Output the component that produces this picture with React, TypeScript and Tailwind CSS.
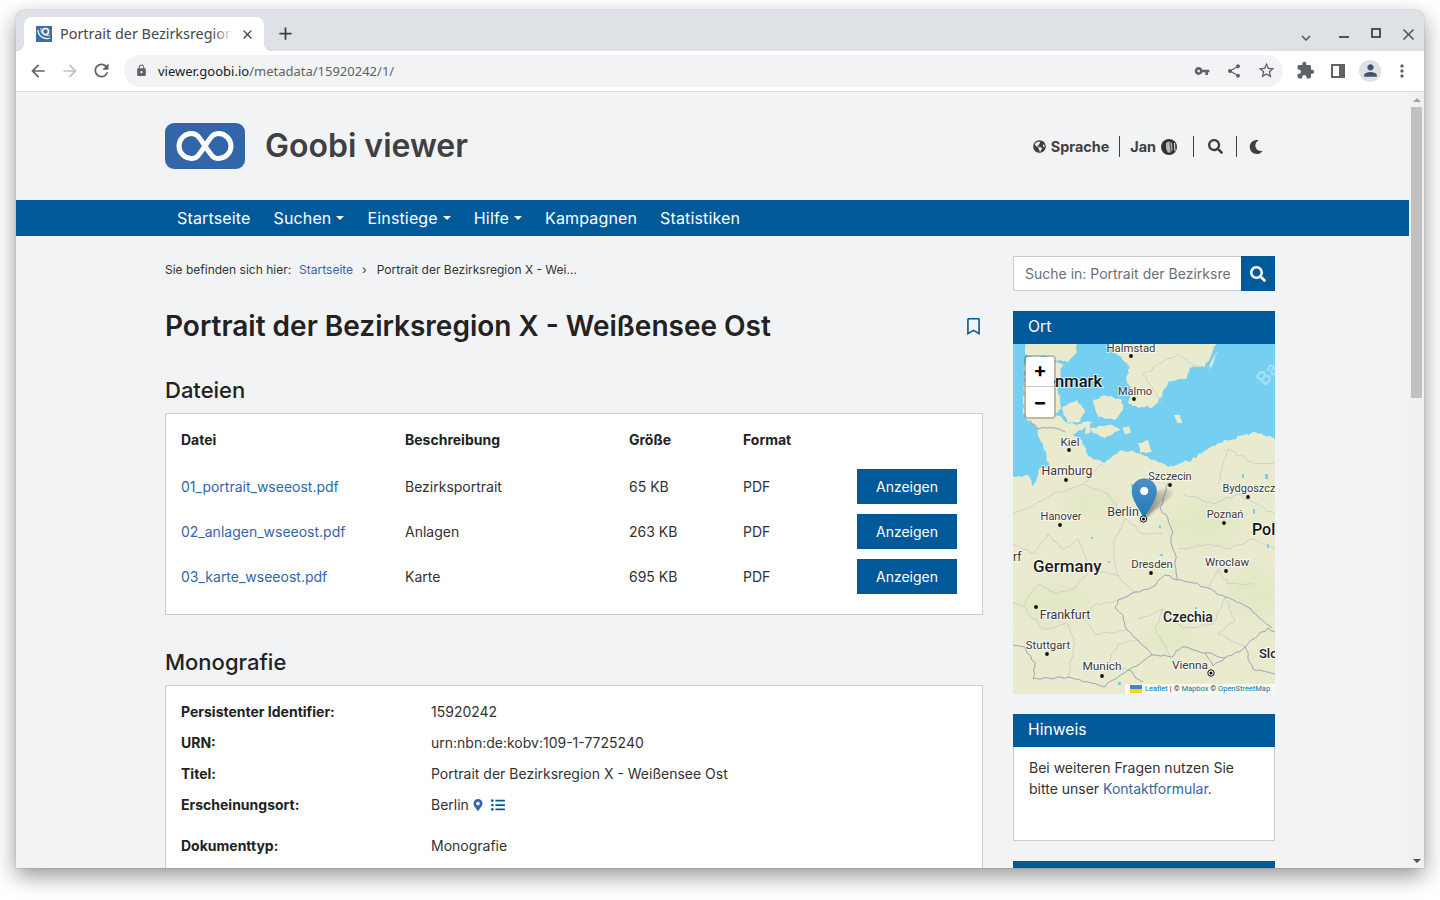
import React from 'react';
import { MdArrowBack, MdArrowForward, MdRefresh, MdLock, MdVpnKey, MdShare, MdStarBorder, MdExtension, MdMoreVert, MdPerson, MdClose, MdAdd, MdKeyboardArrowDown } from 'react-icons/md';
import { FaGlobeAmericas, FaSearch, FaMoon, FaRegBookmark, FaMapMarkerAlt, FaListUl } from 'react-icons/fa';

const files = [
  ['01_portrait_wseeost.pdf', 'Bezirksportrait', '65 KB'],
  ['02_anlagen_wseeost.pdf', 'Anlagen', '263 KB'],
  ['03_karte_wseeost.pdf', 'Karte', '695 KB'],
];

let seed = 7;
function rnd() {
  seed = (seed * 9301 + 49297) % 233280;
  return seed / 233280 - 0.5;
}
function jag(points: string, amp: number, step: number) {
  const p = points.split(' ').map((s) => s.split(',').map(Number));
  const out: string[] = [];
  for (let i = 0; i < p.length - 1; i++) {
    const [x0, y0] = p[i];
    const [x1, y1] = p[i + 1];
    const len = Math.hypot(x1 - x0, y1 - y0);
    const n = Math.max(1, Math.round(len / step));
    for (let k = 0; k < n; k++) {
      const t = k / n;
      const j = k === 0 ? 0 : amp;
      out.push(`${(x0 + (x1 - x0) * t + rnd() * j).toFixed(1)},${(y0 + (y1 - y0) * t + rnd() * j).toFixed(1)}`);
    }
  }
  out.push(p[p.length - 1].join(','));
  return out.join(' ');
}

const mainland = jag('-6,356 -6,134 15,131 20,142 27,124 36,122 30,100 22,82 14,76 10,66 12,20 40,17 50,20 45,40 48,65 42,70 56,80 80,78 70,86 58,90 69,96 75,112 92,119 109,106 125,109 142,116 155,123 179,116 205,99 242,88 268,96 268,356 -6,356', 3, 3);
const sweden = jag('95,-5 205,-5 197,14 192,23 177,24 174,34 155,38 149,53 140,63 125,64 115,59 118,44 113,34 117,23 105,11 99,6 95,-5', 2.6, 3);
const islands = [
  '49,63 64,56 72,66 67,78 54,79 49,63',
  '80,56 92,51 109,56 110,66 102,76 85,73 80,56',
  '77,84 99,81 107,86 92,94 80,89 77,84',
  '125,99 135,96 139,108 127,109 125,99',
  '161,71 167,71 169,79 164,79 161,71',
  '205,6 200,20 195,29 197,20 205,6',
  '12,-5 62,-5 64,8 55,18 40,16 30,12 20,14 12,10 12,-5',
  '110,83 116,82 118,88 112,90 110,83',
  '72,82 76,80 78,88 72,90 72,82',
].map((s) => jag(s, 2, 3));
const borders = [
  '155,139 152,150 147,163 155,175 159,186 158,198 162,209 163,225 164,236',
  '164,236 152,231 139,243 122,248 105,256 102,263 110,271 114,286 125,296 139,311 159,313 169,303 192,309 212,314 232,303 255,284 262,288',
  '164,236 180,239 195,244 212,253 235,263 259,284',
  '139,311 115,326 130,338',
  '55,333 75,338 92,343 115,326',
  '0,301 12,303 22,318 20,335 38,335 55,333',
  '17,76 25,85 42,84 52,88',
  '192,309 200,322 212,314',
  '232,303 240,325 262,330',
].map((s) => jag(s, 2.6, 4));
const faint = [
  '0,200 20,210 35,190 50,205 65,195 78,225 60,245 45,250 25,240 10,262 0,258',
  '78,225 105,232 122,248 105,256 80,262 70,275 82,290 114,286',
  '70,140 95,150 112,175 100,200 105,232',
  '170,150 200,160 225,150 262,170',
  '165,205 195,200 215,205 240,195 262,205',
  '195,244 205,225 215,240 240,240',
  '125,275 150,265 170,285 200,280 212,253',
  '10,262 30,285 55,280 62,300 55,333',
  '150,60 130,30 165,10 185,24',
  '205,140 215,105 242,120 262,118',
  '0,170 22,160 40,150 70,140 90,120',
  '112,175 130,190 150,190',
  '212,253 222,275 205,290 232,303',
  '150,265 142,285 159,313',
  '125,296 105,300 95,320 115,326',
].map((s) => jag(s, 2.6, 4));
const labels: [string, number, number, number][] = [
  ['Halmstad', 118, 8, 11.3], ['Malmo', 122, 51, 11], ['Kiel', 57, 102, 11.5], ['Hamburg', 54, 131, 12.3], ['Szczecin', 157, 136, 11], ['Bydgoszcz', 236, 148, 11],
  ['Hanover', 48, 176, 11], ['Poznań', 212, 174, 11], ['Dresden', 139, 224, 11.3], ['Wroclaw', 214, 222, 11.5], ['Frankfurt', 52, 275, 12.5], ['Stuttgart', 35, 305, 11.3], ['Munich', 89, 326, 11.8], ['Vienna', 177, 325, 11.8], ['Berlin', 110, 172, 12.5],
];
const dots = [[118, 12], [121, 55], [56, 106], [53, 136], [157, 141], [235, 153], [47, 181], [211, 179], [138, 229], [213, 227], [23, 263], [34, 310], [89, 332]];

function MapDrawing() {
  const halo = { paintOrder: 'stroke', stroke: 'rgba(255,255,255,0.7)', strokeWidth: 2 } as React.CSSProperties;
  return (
    <svg width="262" height="350" viewBox="0 0 262 350" className="block" style={{ fontFamily: 'Roboto, sans-serif' }}>
      <defs>
        <linearGradient id="pinG" x1="0" y1="0" x2="0" y2="1">
          <stop offset="0" stopColor="#4a90c8" />
          <stop offset="1" stopColor="#1f78b8" />
        </linearGradient>
        <linearGradient id="shadowG" x1="0" y1="1" x2="1" y2="0">
          <stop offset="0" stopColor="#000" stopOpacity="0.5" />
          <stop offset="1" stopColor="#000" stopOpacity="0.05" />
        </linearGradient>
        <filter id="soft"><feGaussianBlur stdDeviation="7" /></filter>
        <filter id="sb"><feGaussianBlur stdDeviation="1.4" /></filter>
        <filter id="tile"><feGaussianBlur stdDeviation="0.35" /></filter>
      </defs>
      <rect width="262" height="350" fill="#75cff0" />
      <g filter="url(#tile)">
        <polygon points={mainland} fill="#eaeacf" />
        <polygon points={sweden} fill="#eaeacf" />
        {islands.map((p) => <polygon key={p} points={p} fill="#eaeacf" />)}
        <g filter="url(#soft)" fill="#e0e8c2" opacity="0.8">
          <ellipse cx="190" cy="180" rx="40" ry="25" />
          <ellipse cx="45" cy="260" rx="35" ry="22" />
          <ellipse cx="155" cy="295" rx="32" ry="12" />
          <ellipse cx="240" cy="250" rx="24" ry="26" />
          <ellipse cx="80" cy="160" rx="30" ry="14" />
        </g>
        <g fill="none" stroke="#c6cbc4" strokeWidth="0.8">
          {faint.map((p) => <polyline key={p} points={p} />)}
        </g>
        <g fill="none" stroke="#9da3b5" strokeWidth="1">
          {borders.map((p) => <polyline key={p} points={p} />)}
        </g>
        <g fill="#75cff0">
          <rect x="118" y="140" width="2" height="3" />
          <rect x="146" y="181" width="2" height="3" />
          <rect x="147" y="210" width="3" height="2" />
          <rect x="95" y="217" width="2" height="2" />
          <rect x="85" y="322" width="2" height="5" />
          <rect x="105" y="338" width="3" height="3" />
          <rect x="78" y="193" width="2" height="2" />
          <rect x="240" y="165" width="2" height="5" />
          <rect x="254" y="200" width="2" height="4" />
          <rect x="252" y="130" width="3" height="5" />
          <rect x="229" y="130" width="2" height="4" />
          <rect x="182" y="263" width="2" height="2" />
        </g>
      </g>
      <text x="246" y="42" fill="#a6dff5" fontSize="20" transform="rotate(-50 250 36)" fontWeight="500">Ba</text>
      {labels.map(([t, x, y, s]) => (
        <text key={t} x={x} y={y} textAnchor="middle" fill="#3a3a3a" fontSize={s} style={halo}>{t}</text>
      ))}
      <text x="89" y="43" textAnchor="end" fill="#111" fontSize="16.5" fontWeight="500" style={halo}>Denmark</text>
      <text x="20" y="228" fill="#1c1c1c" fontSize="17" fontWeight="500" style={halo}>Germany</text>
      <text x="175" y="278" textAnchor="middle" fill="#1c1c1c" fontSize="14" fontWeight="500" style={halo}>Czechia</text>
      <text x="239" y="191" fill="#111" fontSize="16" fontWeight="500" style={halo}>Pol</text>
      <text x="246" y="314" fill="#222" fontSize="13" fontWeight="500" style={halo}>Slo</text>
      <text x="0" y="217" fill="#333" fontSize="12" style={halo}>rf</text>
      <g fill="#111">
        {dots.map(([x, y]) => <circle key={`${x}-${y}`} cx={x} cy={y} r="1.9" />)}
      </g>
      <circle cx="198" cy="329" r="3.2" fill="#fff" stroke="#111" strokeWidth="1" />
      <circle cx="198" cy="329" r="1.6" fill="#111" />
      <path d="M131 175 L158 152 Q165 146 152 145 L138 150 Z" fill="url(#shadowG)" filter="url(#sb)" />
      <path d="M131 175 C128 166 119 157 119 147 A12.2 12.2 0 0 1 143.5 147 C143.5 157 134 166 131 175 Z" fill="url(#pinG)" stroke="#2a7ab5" strokeWidth="0.6" />
      <circle cx="131.2" cy="147" r="4" fill="#fff" />
      <circle cx="130.5" cy="175" r="3.2" fill="#fff" stroke="#111" strokeWidth="1" />
      <circle cx="130.5" cy="175" r="1.6" fill="#111" />
    </svg>
  );
}

function Favicon() {
  return (
    <svg width="16" height="16" viewBox="0 0 16 16" className="shrink-0">
      <rect width="16" height="16" fill="#3a6ea8" />
      <circle cx="9.5" cy="5.5" r="3" fill="none" stroke="#fff" strokeWidth="1.6" />
      <path d="M2 4 C2 10 8 14 14 12" fill="none" stroke="#fff" strokeWidth="1.3" />
      <path d="M5 2 C4 7 9 11 14 9" fill="none" stroke="#dce6f2" strokeWidth="1" />
    </svg>
  );
}

export default function App() {
  return (
    <div className="h-[900px] w-[1440px] overflow-hidden bg-white pl-4 pt-[10px]">
      <div className="flex h-[858px] w-[1408px] flex-col overflow-hidden rounded-t-[8px] bg-[#f2f3f5] shadow-[0_8px_22px_rgba(0,0,0,0.42),0_0_1px_rgba(0,0,0,0.5)]">
        {/* tab strip */}
        <div className="flex h-[41px] shrink-0 items-end bg-[#dee1e6] pl-2" style={{ fontFamily: '"Noto Sans", sans-serif' }}>
          <div className="relative flex h-[34px] w-[240px] items-center rounded-t-[8px] bg-white pl-3 pr-2">
            <span className="absolute bottom-0 left-[-8px] h-2 w-2 bg-[radial-gradient(circle_at_0_0,transparent_8px,white_8.5px)]" />
            <span className="absolute bottom-0 right-[-8px] h-2 w-2 bg-[radial-gradient(circle_at_100%_0,transparent_8px,white_8.5px)]" />
            <Favicon />
            <div className="relative mb-[2px] ml-2 w-[173px] overflow-hidden whitespace-nowrap text-[14.4px] leading-[19px] text-[#45474a]">
              Portrait der Bezirksregion X - Weißensee
              <span className="absolute inset-y-0 right-0 w-5 bg-gradient-to-r from-transparent to-white" />
            </div>
            <MdClose className="ml-[7px] text-[15px] text-[#3c4043]" />
          </div>
          <MdAdd className="mb-[7px] ml-[11px] text-[21px] text-[#3c4043]" />
          <div className="flex-1" />
          <div className="mb-[4px] flex items-start text-[#50535a]">
            <MdKeyboardArrowDown className="mt-[6px] text-[18px]" />
            <span className="ml-[24px] mt-[13px] h-[2px] w-[10px] bg-[#50535a]" />
            <span className="ml-[22px] mt-[5px] h-[10px] w-[10px] border-2 border-[#50535a]" />
            <MdClose className="ml-[18px] mr-[6px] mt-[2px] text-[19px]" />
          </div>
        </div>
        {/* toolbar */}
        <div className="flex h-[41px] shrink-0 items-center border-b border-[#dadce0] bg-white pb-px" style={{ fontFamily: '"Noto Sans", sans-serif' }}>
          <MdArrowBack className="ml-[12px] text-[20px] text-[#5f6368]" />
          <MdArrowForward className="ml-[12px] text-[20px] text-[#bdc1c6]" />
          <MdRefresh className="ml-[11px] text-[21px] text-[#5f6368]" />
          <div className="ml-[12px] flex h-[32px] w-[1159px] items-center rounded-full bg-[#f1f3f4] pl-[11px] pr-[7px]">
            <MdLock className="text-[13px] text-[#5f6368]" />
            <span className="ml-[10px] mt-[2px] text-[13px] leading-none text-[#202124]">viewer.goobi.io<span className="text-[#5f6368]">/metadata/15920242/1/</span></span>
            <div className="flex-1" />
            <MdVpnKey className="text-[16px] text-[#5f6368]" />
            <MdShare className="ml-[16px] text-[16px] text-[#5f6368]" />
            <MdStarBorder className="ml-[15px] text-[19px] text-[#5f6368]" />
          </div>
          <MdExtension className="ml-[13px] text-[19px] text-[#5f6368]" />
          <span className="ml-[16px] flex h-[14px] w-[14px] justify-end border-2 border-[#5f6368] bg-white"><span className="h-full w-[4px] bg-[#5f6368]" /></span>
          <span className="ml-[14px] flex h-[22px] w-[22px] items-center justify-center rounded-full bg-[#dee1e6]"><MdPerson className="text-[19px] text-[#45526b]" /></span>
          <MdMoreVert className="ml-[11px] text-[20px] text-[#5f6368]" />
        </div>
        {/* viewport */}
        <div className="flex min-h-0 flex-1" style={{ fontFamily: 'Inter, sans-serif' }}>
          <div className="min-w-0 flex-1 overflow-hidden text-[14px] text-[#333]">
            {/* header */}
            <header className="flex h-[108px] w-[1259px] items-center justify-between pl-[149px] pr-[12px]">
              <div className="flex items-center">
                <svg width="80" height="46" viewBox="0 0 80 46" className="block">
                  <rect width="80" height="46" rx="9" fill="#3365a9" />
                  <path d="M40 23 C34 14 32 10.5 26.5 10.5 A12.5 12.5 0 0 0 26.5 35.5 C32 35.5 34 32 40 23 C46 14 48 10.5 53.5 10.5 A12.5 12.5 0 0 1 53.5 35.5 C48 35.5 46 32 40 23 Z" fill="none" stroke="#fff" strokeWidth="5" />
                </svg>
                <span className="ml-5 text-[32px] font-semibold leading-none text-[#404040]">Goobi viewer</span>
              </div>
              <div className="flex items-center pt-[2px] text-[14.4px] font-bold text-[#404040]">
                <FaGlobeAmericas className="text-[13px]" />
                <span className="ml-[5px]">Sprache</span>
                <span className="ml-[10px] h-[21px] w-px bg-[#404040]" />
                <span className="ml-[10px]">Jan</span>
                <svg width="16" height="16" viewBox="0 0 16 16" className="ml-[5px]">
                  <circle cx="8" cy="8" r="8" fill="#333" />
                  <path d="M5 4 Q8 1 11 4 L11.5 11 Q9 15 6.5 13 L5 9 Z" fill="#b8b8b8" />
                  <path d="M9 3 L10 13" stroke="#555" strokeWidth="1.2" />
                  <path d="M13.5 4 L14 12" stroke="#f2f3f5" strokeWidth="1" />
                </svg>
                <span className="ml-4 h-[21px] w-px bg-[#404040]" />
                <FaSearch className="ml-[14px] text-[15px]" />
                <span className="ml-[13px] h-[21px] w-px bg-[#404040]" />
                <FaMoon className="ml-[12px] text-[14px]" />
              </div>
            </header>
            {/* nav */}
            <nav className="flex h-9 items-center gap-[23px] bg-[#005a9a] pl-[161px] text-[16px] tracking-[0.15px] text-white">
              <span>Startseite</span>
              <span className="flex items-center">Suchen<span className="ml-[5px] h-0 w-0 border-x-[4px] border-t-[4px] border-x-transparent border-t-white" /></span>
              <span className="flex items-center">Einstiege<span className="ml-[5px] h-0 w-0 border-x-[4px] border-t-[4px] border-x-transparent border-t-white" /></span>
              <span className="flex items-center">Hilfe<span className="ml-[5px] h-0 w-0 border-x-[4px] border-t-[4px] border-x-transparent border-t-white" /></span>
              <span>Kampagnen</span>
              <span>Statistiken</span>
            </nav>
            {/* body */}
            <div className="flex w-[1259px] gap-[30px] pl-[149px]">
              <main className="w-[818px] shrink-0">
                <div className="flex h-[67px] items-center text-[12px] text-[#333]">
                  <span>Sie befinden sich hier:</span>
                  <span className="ml-[8px] text-[#3365a9]">Startseite</span>
                  <span className="ml-[9px]">›</span>
                  <span className="ml-[10px]">Portrait der Bezirksregion X - Wei...</span>
                </div>
                <div className="flex h-[42px] items-center justify-between pr-[1px]">
                  <h1 className="mt-[3px] text-[28px] font-semibold leading-none text-[#222]">Portrait der Bezirksregion X - Weißensee Ost</h1>
                  <FaRegBookmark className="mt-[4px] text-[17px] text-[#005a9a]" />
                </div>
                <h2 className="mt-[32px] text-[22px] font-medium leading-[27px] text-[#222]">Dateien</h2>
                <section className="mt-[9px] h-[202px] border border-[#ccc] bg-white pl-[15px] pt-[15px]">
                  <div className="flex h-[20px] items-center font-bold text-[#222]">
                    <span className="w-[224px]">Datei</span>
                    <span className="w-[224px]">Beschreibung</span>
                    <span className="w-[114px]">Größe</span>
                    <span>Format</span>
                  </div>
                  <div className="mt-[20px] flex flex-col gap-[10px]">
                    {files.map(([n, d, s]) => (
                      <div key={n} className="flex h-[35px] items-center">
                        <span className="w-[224px] text-[#3365a9]">{n}</span>
                        <span className="w-[224px]">{d}</span>
                        <span className="w-[114px]">{s}</span>
                        <span className="w-[114px]">PDF</span>
                        <span className="flex h-[35px] w-[100px] items-center justify-center bg-[#005a9a] text-white">Anzeigen</span>
                      </div>
                    ))}
                  </div>
                </section>
                <h2 className="mt-[34px] text-[22px] font-medium leading-[27px] text-[#222]">Monografie</h2>
                <section className="mt-[9px] h-[300px] border border-[#ccc] bg-white pl-[15px] pt-[10px]">
                  {[
                    ['Persistenter Identifier:', '15920242'],
                    ['URN:', 'urn:nbn:de:kobv:109-1-7725240'],
                    ['Titel:', 'Portrait der Bezirksregion X - Weißensee Ost'],
                  ].map(([k, v]) => (
                    <div key={k} className="flex h-[31px] items-center">
                      <span className="w-[250px] font-bold text-[#222]">{k}</span>
                      <span>{v}</span>
                    </div>
                  ))}
                  <div className="flex h-[31px] items-center">
                    <span className="w-[250px] font-bold text-[#222]">Erscheinungsort:</span>
                    <span>Berlin</span>
                    <FaMapMarkerAlt className="ml-[3px] text-[12px] text-[#3365a9]" />
                    <FaListUl className="ml-[7px] text-[14px] text-[#005a9a]" />
                  </div>
                  <div className="mt-[10px] flex h-[31px] items-center">
                    <span className="w-[250px] font-bold text-[#222]">Dokumenttyp:</span>
                    <span>Monografie</span>
                  </div>
                </section>
              </main>
              <aside className="w-[262px] shrink-0">
                <div className="mt-5 flex h-[35px] border border-[#ccc] bg-white">
                  <div className="min-w-0 flex-1 overflow-hidden whitespace-nowrap pl-[11px] pr-[11px] leading-[33px] text-[#6b7076]">
                    <div className="overflow-hidden">Suche in: Portrait der Bezirksregion</div>
                  </div>
                  <div className="-my-px -mr-px flex w-[34px] items-center justify-center bg-[#005a9a] text-white">
                    <FaSearch className="text-[16px]" />
                  </div>
                </div>
                <div className="mt-5 flex h-[33px] items-center bg-[#005a9a] pb-[1px] pl-[15px] text-[15.7px] text-white">Ort</div>
                <div className="relative h-[350px] overflow-hidden">
                  <MapDrawing />
                  <div className="absolute left-[11px] top-[11px] w-[32px] rounded-[4px] border-2 border-black/20 bg-clip-padding">
                    <div className="flex h-[30px] items-center justify-center rounded-t-[2px] border-b border-[#ccc] bg-white pb-[3px] text-[20px] font-bold leading-none text-black">+</div>
                    <div className="flex h-[30px] items-center justify-center rounded-b-[2px] bg-white text-[20px] font-bold leading-none text-black">−</div>
                  </div>
                  <div className="absolute bottom-0 right-0 flex h-[10px] w-[150px] items-center bg-white/70 pl-[5px] text-[7.5px] leading-none text-[#333]" style={{ fontFamily: 'Roboto, sans-serif' }}>
                    <span className="flex h-2 w-3 flex-col"><span className="h-1 bg-[#4c7be0]" /><span className="h-1 bg-[#ffd500]" /></span>
                    <span className="ml-[3px] text-[#0078a8]">Leaflet</span>
                    <span className="mx-[2px]">|</span>
                    <span>© <span className="text-[#0078a8]">Mapbox</span> © <span className="text-[#0078a8]">OpenStreetMap</span></span>
                  </div>
                </div>
                <div className="mt-5 flex h-[33px] items-center bg-[#005a9a] pb-[1px] pl-[15px] text-[15.7px] text-white">Hinweis</div>
                <div className="h-[94px] border border-t-0 border-[#ccc] bg-white px-[15px] pt-[10px] leading-[21px]">
                  Bei weiteren Fragen nutzen Sie bitte unser <span className="text-[#3365a9]">Kontaktformular</span>.
                </div>
                <div className="mt-5 h-[33px] bg-[#005a9a]" />
              </aside>
            </div>
          </div>
          {/* scrollbar */}
          <div className="flex w-[15px] shrink-0 flex-col items-center bg-[#f1f1f1]">
            <span className="mt-[6px] h-0 w-0 border-x-[4px] border-b-[4px] border-x-transparent border-b-[#a3a3a3]" />
            <span className="mt-[5px] h-[291px] w-[11px] bg-[#c1c1c1]" />
            <span className="flex-1" />
            <span className="mb-[5px] h-0 w-0 border-x-[4px] border-t-[4px] border-x-transparent border-t-[#505050]" />
          </div>
        </div>
      </div>
    </div>
  );
}
